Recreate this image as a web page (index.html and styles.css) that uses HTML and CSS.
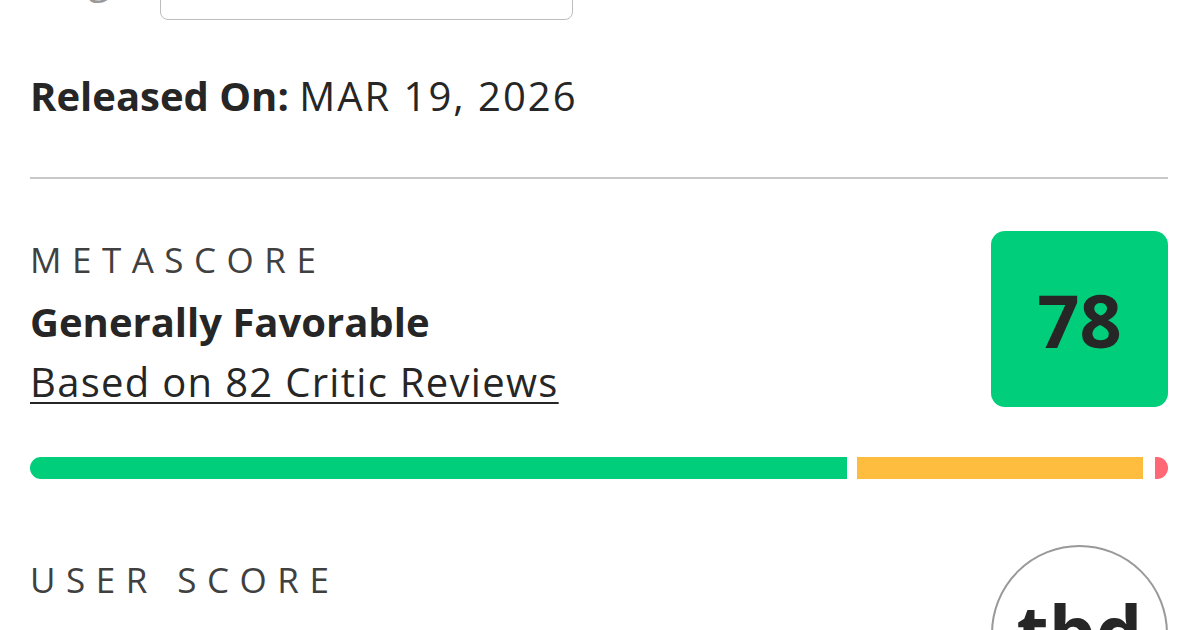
FILE: index.html
```html
<!DOCTYPE html>
<html lang="en">
<head>
    <meta charset="UTF-8">
    <title>Scores</title>
    <link rel="stylesheet" href="styles.css">
</head>
<body>
    <div class="page">
        <div class="top_row">
            <span class="top_label"><span class="top_glyph">g</span></span>
            <div class="select_box"></div>
        </div>

        <p class="release"><b>Released On:</b> <span class="release_date">MAR 19, 2026</span></p>

        <hr class="divider">

        <div class="score_row">
            <div class="score_info">
                <div class="score_title">Metascore</div>
                <div class="score_verdict">Generally Favorable</div>
                <a class="score_link" href="#">Based on 82 Critic Reviews</a>
            </div>
            <div class="meta_box">78</div>
        </div>

        <div class="dist_bar">
            <span class="seg seg_pos" style="width: 817px"></span>
            <span class="seg seg_mix" style="width: 286px"></span>
            <span class="seg seg_neg" style="width: 13px"></span>
        </div>

        <div class="score_row user_row">
            <div class="score_info">
                <div class="score_title">User Score</div>
            </div>
            <div class="user_circle">tbd</div>
        </div>
    </div>
</body>
</html>
```

FILE: styles.css
```css
body { margin: 0; background: #fff; color: #262626; font-family: "Open Sans", Lato, sans-serif; }
.page { padding: 0 32px 0 30px; }

.top_row { display: flex; align-items: flex-end; height: 20px; }
.top_label { align-self: flex-start; width: 130px; height: 4px; overflow: hidden; padding-left: 58px; box-sizing: border-box; color: #999; }
.top_glyph { display: block; margin-top: -22px; font-size: 40px; line-height: 0; }
.select_box { width: 411px; height: 60px; margin-top: -40px; border: 1px solid #bdbdbd; border-radius: 8px; flex: none; }

.release { margin: 54px 0 0; font-size: 40px; line-height: 44px; }
.release b { font-weight: 700; }
.release_date { letter-spacing: 2px; }

.divider { margin: 59px 0 0; border: none; border-top: 2px solid #c8c8c8; }

.score_row { display: flex; justify-content: space-between; align-items: flex-start; margin-top: 52px; }
.score_info { display: flex; flex-direction: column; padding-top: 9px; }
.score_title { font-size: 35px; line-height: 40px; text-transform: uppercase; letter-spacing: 10.5px; color: #404040; }
.score_verdict { margin-top: 20px; font-size: 40px; line-height: 44px; font-weight: 700; }
.score_link { margin-top: 16px; font-size: 40px; line-height: 44px; letter-spacing: 1.3px; color: #262626; text-decoration: underline; text-decoration-thickness: 2px; text-underline-offset: 5px; }

.meta_box { width: 177px; height: 176px; border-radius: 14px; background: #00ce7a; display: flex; align-items: center; justify-content: center; font-size: 74px; font-weight: 700; }

.dist_bar { display: flex; gap: 10px; margin-top: 50px; height: 22px; }
.seg { display: block; height: 100%; }
.seg_pos { background: #00ce7a; border-radius: 11px 0 0 11px; }
.seg_mix { background: #ffbd3f; }
.seg_neg { background: #ff6874; border-radius: 0 11px 11px 0; margin-left: 2px; }

.user_row { margin-top: 66px; }
.user_row .score_info { padding-top: 15px; }
.user_circle { width: 177px; height: 177px; border: 2px solid #999; border-radius: 50%; display: flex; justify-content: center; padding-top: 44px; box-sizing: border-box; font-size: 74px; font-weight: 700; line-height: 80px; }
```
